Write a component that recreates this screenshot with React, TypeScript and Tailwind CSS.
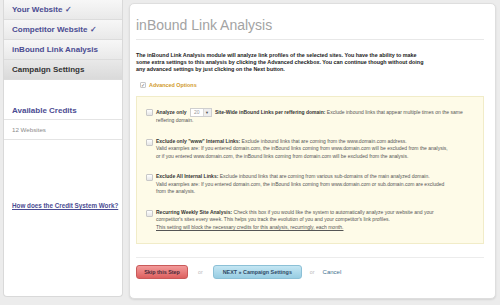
const navItems = [
  { label: "Your Website ✓", active: false },
  { label: "Competitor Website ✓", active: false },
  { label: "inBound Link Analysis", active: false },
  { label: "Campaign Settings", active: true },
];

function Check() {
  return (
    <span className="mt-[1px] inline-block h-[7px] w-[7px] shrink-0 rounded-[1px] border border-[#c8c8c8] bg-gradient-to-b from-white to-[#e6e6e6]" />
  );
}

function Sidebar() {
  return (
    <div className="flex h-[297px] w-[120px] flex-col rounded-b-[4px] border border-t-0 border-[#d9d9d9] bg-white">
      {navItems.map((item) => (
        <div
          key={item.label}
          className={`flex h-[20px] items-center border-b border-[#dcdcdc] pl-[8px] text-[8px] font-bold ${
            item.active
              ? "bg-gradient-to-b from-[#e9e9e9] to-[#dadada] text-[#333]"
              : "bg-gradient-to-b from-[#f7f7f7] to-[#e9e9e9] text-[#4b4c92]"
          }`}
        >
          {item.label}
        </div>
      ))}
      <div className="mt-[25px] border-b border-[#e4e4e4] px-[8px] pb-[2px] text-[8px] font-bold text-[#4b4c92]">
        Available Credits
      </div>
      <div className="border-b border-[#e4e4e4] px-[8px] py-[5px] text-[6.2px] text-[#8a8a8a]">12 Websites</div>
      <a className="mt-[61px] whitespace-nowrap pl-[8px] text-[6.3px] font-bold text-[#4b4c92] underline">
        How does the Credit System Work?
      </a>
    </div>
  );
}

function Option({ children }: { children: React.ReactNode }) {
  return (
    <div className="flex gap-[3px]">
      <Check />
      <div className="text-[5px] leading-[7.5px] text-[#555]">{children}</div>
    </div>
  );
}

export default function App() {
  return (
    <div
      className="flex h-[305px] w-[500px] bg-[#ececec] pl-[3px]"
      style={{ fontFamily: '"Liberation Sans", Arial, sans-serif' }}
    >
      <Sidebar />
      <div className="ml-[6px] mt-[3px] flex h-[296px] w-[367px] flex-col rounded-[5px] border border-[#dedede] bg-white px-[6px] shadow-[0_1px_2px_rgba(0,0,0,0.1)]">
        <h1 className="mt-[14px] text-[14px] leading-[14px] text-[#a3a3a3]">inBound Link Analysis</h1>
        <div className="mt-[7px] h-px w-[348px] bg-[#e8e8e8]" />
        <p className="mt-[12px] text-[5.4px] font-bold leading-[7px] text-[#222]">
          The inBound Link Analysis module will analyze link profiles of the selected sites. You have the ability to make
          <br />
          some extra settings to this analysis by clicking the Advanced checkbox. You can continue though without doing
          <br />
          any advanced settings by just clicking on the Next button.
        </p>
        <div className="mt-[8px] flex items-center gap-[3px] pl-[4px]">
          <span className="flex h-[6px] w-[6px] items-center justify-center rounded-[1px] border border-[#c8c8c8] bg-white text-[5px] leading-none text-[#666]">
            ✓
          </span>
          <span className="text-[5.4px] font-bold text-[#d19a2c]">Advanced Options</span>
        </div>
        <div className="mt-[7px] flex h-[148px] w-[348px] flex-col gap-[13px] border border-[#f1ecc8] bg-[#fefbe8] px-[9px] pt-[11px]">
          <Option>
            <b className="text-[#333]">Analyze only</b>{" "}
            <span className="mx-[2px] inline-flex h-[9px] items-center border border-[#cfcfcf] bg-white align-middle">
              <span className="px-[3px] text-[#999]">20</span>
              <span className="flex h-full items-center border-l border-[#d8d8d8] bg-[#eee] px-[1.5px] text-[4px] text-[#555]">▼</span>
            </span>{" "}
            <b className="text-[#333]">Site-Wide inBound Links per reffering domain:</b> Exclude inbound links that appear
            multiple times on the same
            <br />
            reffering domain.
          </Option>
          <Option>
            <b className="text-[#333]">Exclude only "www" Internal Links:</b> Exclude inbound links that are coming from
            the www.domain.com address.
            <br />
            Valid examples are: If you entered domain.com, the inBound links coming from www.domain.com will be excluded
            from the analysis,
            <br />
            or if you entered www.domain.com, the inBound links coming from domain.com will be excluded from the analysis.
          </Option>
          <Option>
            <b className="text-[#333]">Exclude All Internal Links:</b> Exclude inbound links that are coming from various
            sub-domains of the main analyzed domain.
            <br />
            Valid examples are: If you entered domain.com, the inBound links coming from www.domain.com or sub.domain.com
            are excluded
            <br />
            from the analysis.
          </Option>
          <Option>
            <b className="text-[#333]">Recurring Weekly Site Analysis:</b> Check this box if you would like the system to
            automatically analyze your website and your
            <br />
            competitor's sites every week. This helps you track the evolution of you and your competitor's link profiles.
            <br />
            <span className="underline">This setting will block the necessary credits for this analysis, recurringly, each month.</span>
          </Option>
        </div>
        <div className="mt-[13px] h-px w-[348px] bg-[#ececec]" />
        <div className="mt-[7px] flex items-center text-[5.4px]">
          <button className="flex h-[14px] w-[52px] items-center justify-center rounded-[3px] border border-[#c95a5a] bg-gradient-to-b from-[#f29a9a] to-[#dd5f5f] font-bold text-[#4a2a3a]">
            Skip this Step
          </button>
          <span className="mx-[10px] text-[#bbb]">or</span>
          <button className="flex h-[14px] w-[89px] items-center justify-center rounded-[3px] border border-[#8cc0d6] bg-gradient-to-b from-[#c4e6f3] to-[#97cde3] font-bold text-[#2f4a66]">
            NEXT » Campaign Settings
          </button>
          <span className="mx-[8px] text-[#bbb]">or</span>
          <span className="text-[6px] text-[#3f6f8f]">Cancel</span>
        </div>
      </div>
    </div>
  );
}
